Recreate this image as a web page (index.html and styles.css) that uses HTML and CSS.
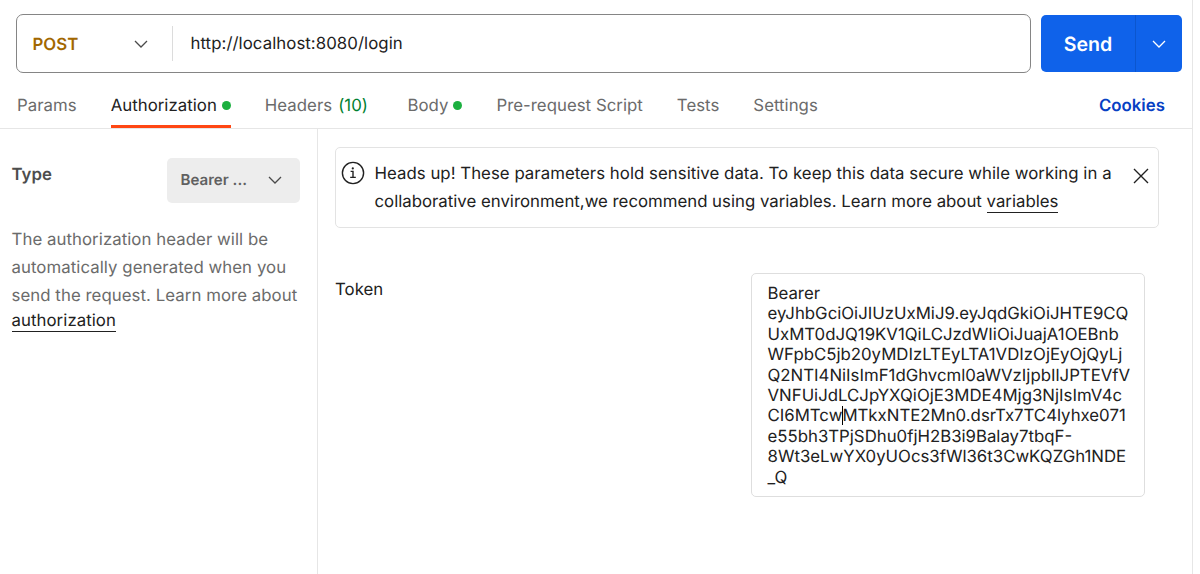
FILE: index.html
```html
<!DOCTYPE html>
<html lang="en">
<head>
<meta charset="utf-8">
<title>Request</title>
<link rel="stylesheet" href="styles.css">
</head>
<body>
<div class="app">
  <header class="request">
    <div class="url-box">
      <div class="method"><span class="method-name">POST</span>
        <svg class="chevron" viewBox="0 0 14 8"><path d="M1 1l6 6 6-6"/></svg>
      </div>
      <div class="url"><span>http://localhost:8080/login</span></div>
    </div>
    <div class="send">
      <div class="send-main"><span>Send</span></div>
      <div class="send-more"><svg class="chevron chevron-light" viewBox="0 0 14 8"><path d="M1 1l6 6 6-6"/></svg></div>
    </div>
  </header>
  <nav class="tabs">
    <div class="tab"><span>Params</span></div>
    <div class="tab active"><span>Authorization</span><i class="dot"></i></div>
    <div class="tab tab-headers"><span>Headers</span><span class="count">(10)</span></div>
    <div class="tab"><span>Body</span><i class="dot"></i></div>
    <div class="tab"><span>Pre-request Script</span></div>
    <div class="tab"><span>Tests</span></div>
    <div class="tab"><span>Settings</span></div>
    <div class="cookies"><span>Cookies</span></div>
  </nav>
  <main class="content">
    <aside class="side">
      <div class="type-row">
        <span class="type-label">Type</span>
        <div class="select"><span>Bearer ...</span><svg class="chevron" viewBox="0 0 14 8"><path d="M1 1l6 6 6-6"/></svg></div>
      </div>
      <p class="help"><span>The authorization header will be</span><br><span>automatically generated when you</span><br><span>send the request. Learn more about</span></p>
      <a class="link help-link">authorization</a>
    </aside>
    <section class="panel">
      <div class="notice">
        <svg class="info" viewBox="0 0 24 24"><circle cx="12" cy="12" r="10.6"/><path d="M9.6 10.4H12v6M9.2 16.4h5.6"/><circle class="info-dot" cx="11.8" cy="7.4" r="1.1"/></svg>
        <p class="notice-text"><span>Heads up! These parameters hold sensitive data. To keep this data secure while working in a</span><br><span class="notice-more">collaborative environment,we recommend using variables. Learn more about <a class="link">variables</a></span></p>
        <svg class="close" viewBox="0 0 16 16"><path d="M1 1l14 14M15 1L1 15"/></svg>
      </div>
      <div class="token-row">
        <label class="token-label">Token</label>
        <div class="token"><span>Bearer</span><br><span>eyJhbGciOiJIUzUxMiJ9.eyJqdGkiOiJHTE9CQ</span><br><span>UxMT0dJQ19KV1QiLCJzdWIiOiJuajA1OEBnb</span><br><span>WFpbC5jb20yMDIzLTEyLTA1VDIzOjEyOjQyLj</span><br><span>Q2NTI4NiIsImF1dGhvcml0aWVzIjpbIlJPTEVfV</span><br><span>VNFUiJdLCJpYXQiOjE3MDE4Mjg3NjIsImV4c</span><br><span>CI6MTcw<i class="caret"></i>MTkxNTE2Mn0.dsrTx7TC4lyhxe071</span><br><span>e55bh3TPjSDhu0fjH2B3i9Balay7tbqF-</span><br><span>8Wt3eLwYX0yUOcs3fWl36t3CwKQZGh1NDE</span><br><span>_Q</span></div>
      </div>
    </section>
  </main>
</div>
</body>
</html>
```
FILE: styles.css
```css
* { box-sizing: border-box; }
body { margin: 0; background: #fff; color: #212121; font: 16.8px/28px Inter, sans-serif; text-rendering: geometricPrecision; }
.app { width: 1193px; height: 574px; border-right: 1px solid #e6e6e6; display: flex; flex-direction: column; overflow: hidden; }
span, .link { white-space: nowrap; }
.chevron { width: 14px; height: 8px; fill: none; stroke: #4a4a4a; stroke-width: 1.3; display: block; flex: none; }
.chevron-light { stroke: #fff; }
.request { display: flex; height: 82px; padding: 14px 10px 0 15.5px; gap: 10px; align-items: flex-start; }
.url-box { width: 1015.5px; height: 59px; border: 1.4px solid #858585; border-radius: 7px; display: flex; align-items: center; }
.method { width: 156px; height: 35px; border-right: 1px solid #dcdcdc; display: flex; align-items: center; justify-content: space-between; padding: 0 24px 0 16px; }
.method-name { color: #a26700; font-weight: 600; padding-top: 2px; }
.url { padding-left: 18px; letter-spacing: 0.06px; }
.send { margin-top: 1px; width: 141px; height: 57px; border-radius: 5px; background: #0f62ea; color: #fff; display: flex; }
.send-main { width: 95px; border-right: 1px solid #0b56cf; display: flex; align-items: center; justify-content: center; font-size: 19.6px; font-weight: 600; }
.send-more { flex: 1; display: flex; align-items: center; justify-content: center; }
.tabs { display: flex; height: 47px; border-bottom: 1px solid #e6e6e6; padding: 0 27px 0 17px; color: #6b6b6b; letter-spacing: 0.03px; }
.tab { display: flex; height: 46px; padding-top: 2px; align-items: center; margin-right: 34px; }
.tab-headers { margin-right: 39.5px; }
.active { color: #212121; border-bottom: 3px solid #ff4713; padding-top: 5px; }
.dot { width: 9px; height: 9px; border-radius: 50%; background: #1cb040; margin: 0 0 1px 5px; }
.count { color: #007f31; margin-left: 6px; }
.cookies { margin-left: auto; height: 46px; padding-top: 2px; display: flex; align-items: center; color: #0640c4; font-weight: 600; }
.content { display: flex; flex: 1; }
.side { width: 318px; border-right: 1px solid #e6e6e6; padding: 28.5px 17.5px 0 11.5px; color: #6b6b6b; letter-spacing: 0.06px; }
.type-row { display: flex; justify-content: space-between; height: 68.5px; }
.type-label { font-weight: 600; line-height: 34px; color: #4d4d4d; }
.select { width: 133px; height: 45px; border-radius: 5px; background: #ededed; display: flex; align-items: center; justify-content: space-between; padding: 0 18px 0 14px; font-weight: 600; font-size: 15.1px; letter-spacing: 0; color: #606060; }
.help { margin: 0; }
.link { color: #212121; text-decoration: none; border-bottom: 1.4px solid #212121; }
.help-link { display: block; width: max-content; line-height: 20px; margin-top: 1px; }
.panel { flex: 1; min-width: 0; padding: 18px 33px 0 17px; letter-spacing: 0.035px; }
.notice { height: 81px; border: 1px solid #e3e3e3; border-radius: 5px; display: flex; padding: 11.5px 9px 0 5px; align-items: flex-start; }
.info { width: 24px; height: 24px; margin-top: 1.5px; fill: none; stroke: #212121; stroke-width: 1.4; flex: none; }
.info .info-dot { fill: #212121; stroke: none; }
.notice-text { margin: 0 0 0 9.5px; flex: 1; min-width: 0; }
.notice-more { letter-spacing: 0; }
.close { width: 16px; height: 16px; margin-top: 8.5px; fill: none; stroke: #212121; stroke-width: 1.4; flex: none; }
.token-row { display: flex; justify-content: space-between; align-items: flex-start; padding: 45px 14px 0 0; }
.token-label { line-height: 33px; padding-top: 1px; }
.token { width: 394px; height: 224px; border: 1px solid #dedede; border-radius: 5px; padding: 10px 0 0 15.5px; line-height: 20.4px; letter-spacing: 0; }
.caret { display: inline-block; width: 1px; height: 19px; margin: -4px -1px 0 0; background: #000; vertical-align: -4px; }
```
